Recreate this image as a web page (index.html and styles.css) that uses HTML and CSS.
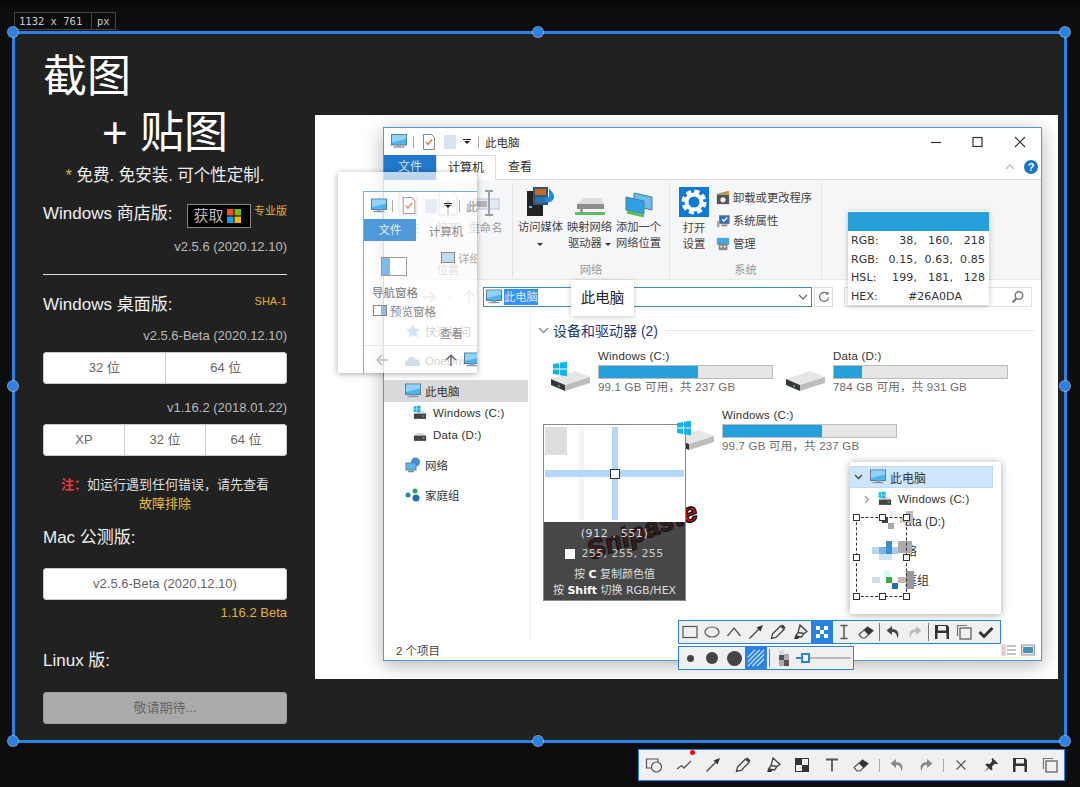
FILE: index.html
```html
<!DOCTYPE html>
<html lang="zh-CN">
<head>
<meta charset="utf-8">
<title>Snipaste</title>
<link rel="stylesheet" href="styles.css">
</head>
<body>
<svg class="sprite" width="0" height="0" aria-hidden="true">
  <symbol id="pc" viewBox="0 0 16 16"><rect x=".5" y="1" width="15" height="10.5" fill="#4db4f2" stroke="#5c7f99"/><path d="M1 1.5h14v4L1 9z" fill="#8fd3f8"/><path d="M6 11.5h4v1.5H6z" fill="#9ab"/><path d="M2.500 13.500h11" stroke="#8a9aa8" stroke-width="1.500"/></symbol>
  <symbol id="qadoc" viewBox="0 0 12 16"><path d="M.5.5h8l3 3v12H.5z" fill="#fff" stroke="#888"/><path d="M3 8l2 2.500L9 5.500" fill="none" stroke="#e8742a" stroke-width="1.400"/></symbol>
  <symbol id="winlogo" viewBox="0 0 16 16"><path d="M1 3l6-1v5.500H1zM8 1.800L15 .8v6.700H8zM1 8.500h6V14l-6-1zM8 8.500h7v6.700l-7-1z" fill="#10b4f0"/></symbol>
  <symbol id="drive" viewBox="0 0 40 20"><path d="M1 8L25 0l15 6-25 8z" fill="#e6e6e6"/><path d="M1 8l14 6v6L1 14z" fill="#363636"/><path d="M15 14l25-8v6l-25 8z" fill="#bdbdbd"/><circle cx="9" cy="15" r="1.100" fill="#4fc05a"/></symbol>
  <symbol id="smalldrive" viewBox="0 0 16 12"><path d="M1 5L4 2h8l3 3z" fill="#d8d8d8"/><rect x="1" y="5" width="14" height="6" fill="#444"/><rect x="11" y="7" width="2" height="1.500" fill="#5c5"/></symbol>
  <symbol id="netglobe" viewBox="0 0 16 16"><circle cx="10.500" cy="5" r="4.500" fill="#3f8fd8"/><rect x="1" y="6" width="10" height="7" fill="#5cb8ef" stroke="#5c7f99"/><path d="M3 14.500h6" stroke="#789" stroke-width="1.500"/></symbol>
  <symbol id="home" viewBox="0 0 16 16"><circle cx="3" cy="8" r="2.500" fill="#2d7fc9"/><circle cx="10" cy="4" r="2.500" fill="#2aa05a"/><circle cx="11" cy="11" r="3.500" fill="#1f6fb8"/></symbol>
  <symbol id="media" viewBox="0 0 30 30"><rect x="1" y="5" width="16" height="25" fill="#222"/><rect x="7" y="1" width="15" height="18" fill="#36566f"/><rect x="9" y="3" width="11" height="6" fill="#c66a2a"/><rect x="9" y="11" width="11" height="6" fill="#2f6db0"/><path d="M23 2c2 4 6 5 5 10-1 4-7 6-9 3s3-5 4-4z" fill="#1a8ee0"/><rect x="3" y="20" width="3" height="2" fill="#4cf"/></symbol>
  <symbol id="mapdrive" viewBox="0 0 32 20"><path d="M3 7L10 1h17l3 6z" fill="#ddd"/><rect x="3" y="7" width="27" height="5" fill="#8d8d8d"/><path d="M1 15h30v3H1z" fill="#5bbf5b"/><rect x="6" y="12" width="3" height="4" fill="#999"/></symbol>
  <symbol id="netloc" viewBox="0 0 28 26"><path d="M9 1l18 4v13L9 14z" fill="#6ebce9" stroke="#4d7a9b"/><path d="M1 5l18 4v13L1 18z" fill="#2f9fe6" stroke="#4d7a9b"/><path d="M2 20l17 4" stroke="#58c058" stroke-width="3"/></symbol>
  <symbol id="gear" viewBox="0 0 30 30"><rect width="30" height="30" fill="#0c7bd8"/><circle cx="15" cy="15" r="7.500" fill="none" stroke="#fff" stroke-width="4"/><circle cx="15" cy="15" r="10.500" fill="none" stroke="#fff" stroke-width="4" stroke-dasharray="5 3.250"/></symbol>
  <symbol id="uninstall" viewBox="0 0 16 16"><rect x="1" y="4" width="14" height="11" fill="#555"/><circle cx="8" cy="10" r="3" fill="#eee"/><path d="M1 3l8-2h6v3H1z" fill="#8fa068"/><path d="M11 0h4v4h-4z" fill="#e89028"/></symbol>
  <symbol id="sysprop" viewBox="0 0 16 16"><rect x="4" y="2" width="11" height="9" fill="#2f6fc8" stroke="#678"/><path d="M7 6l2 2 4-4" stroke="#fff" stroke-width="1.500" fill="none"/><rect x="1" y="8" width="3" height="7" fill="#aaa"/><path d="M6 13h7" stroke="#888" stroke-width="2"/></symbol>
  <symbol id="manage" viewBox="0 0 16 16"><rect x="1" y="1" width="14" height="8" fill="#3fa8ea"/><rect x="3" y="7" width="10" height="8" fill="#888"/><rect x="5" y="10" width="2" height="2" fill="#fff"/><rect x="9" y="10" width="2" height="2" fill="#fff"/></symbol>
  <symbol id="r-doc" viewBox="0 0 20 26"><path d="M1 1h13l5 5v19H1z" fill="#fff" stroke="#888"/></symbol>
  <symbol id="r-open" viewBox="0 0 20 26"><path d="M1 1h13l5 5v19H1z" fill="#fff" stroke="#888"/><path d="M10 25V12M5 17l5-5 5 5" fill="none" stroke="#555" stroke-width="2"/></symbol>
  <symbol id="r-rename" viewBox="0 0 28 26"><rect x="1" y="9" width="26" height="10" fill="#dbe7f3" stroke="#aac"/><rect x="3" y="11" width="12" height="6" fill="#9a9a9a"/><path d="M13 1h8M17 1v24M13 25h8" fill="none" stroke="#6d7a86" stroke-width="1.800"/></symbol>
  <symbol id="i-rect" viewBox="0 0 16 16"><rect x="1" y="2.500" width="14" height="11" fill="none" stroke="#555" stroke-width="1.200"/></symbol>
  <symbol id="i-ell" viewBox="0 0 16 16"><ellipse cx="8" cy="8" rx="7" ry="5" fill="none" stroke="#555" stroke-width="1.200"/></symbol>
  <symbol id="i-poly" viewBox="0 0 16 16"><path d="M1.500 12L8 4l6.500 8" fill="none" stroke="#555" stroke-width="1.300"/></symbol>
  <symbol id="i-arrow" viewBox="0 0 16 16"><path d="M1.500 14.500L10.500 5.500" stroke="#444" stroke-width="1.300"/><path d="M8.500 3.500L15 1l-2.500 6.500z" fill="#333"/></symbol>
  <symbol id="i-pen" viewBox="0 0 16 16"><path d="M2.500 10L10.500 2l3.500 3.500-8 8-4.500 1z" fill="none" stroke="#444" stroke-width="1.300"/><path d="M11 1.500l1.500-1 3 3-1 1.500z" fill="#333"/></symbol>
  <symbol id="i-mark" viewBox="0 0 16 16"><path d="M8 1l7 6.500-3 2-6-1z M6 8.500l6 1-2.500 3.500-6-1z" fill="none" stroke="#444" stroke-width="1.300"/><path d="M3.500 12L2 15h4l2-2z" fill="#333"/></symbol>
  <symbol id="i-mos" viewBox="0 0 16 16"><path d="M2 2h4v4H2zM10 2h4v4h-4zM6 6h4v4H6zM2 10h4v4H2zM10 10h4v4h-4z" fill="#fff"/></symbol>
  <symbol id="i-ibeam" viewBox="0 0 16 16"><path d="M4.500 1.500h7M8 1.500v13M4.500 14.500h7" stroke="#555" stroke-width="1.500" fill="none"/></symbol>
  <symbol id="i-eraser" viewBox="0 0 16 16"><path d="M1 10.500L9.500 3 15 6.500 7 14H4z" fill="none" stroke="#555" stroke-width="1.200"/><path d="M6 6.500L9.500 3 15 6.500 10.500 11z" fill="#333"/></symbol>
  <symbol id="i-undo" viewBox="0 0 16 16"><path d="M7 2L1.500 6.500 7 11V8c3 0 5 1.500 5.500 6.500C15 9 12.500 5 7 5z" fill="currentColor"/></symbol>
  <symbol id="i-redo" viewBox="0 0 16 16"><path d="M9 2l5.500 4.500L9 11V8c-3 0-5 1.500-5.500 6.500C1 9 3.500 5 9 5z" fill="currentColor"/></symbol>
  <symbol id="i-save" viewBox="0 0 16 16"><path d="M1 1h12l2 2v12H1z" fill="#333"/><rect x="4" y="2" width="8" height="4.500" fill="#f0f0f0"/><rect x="3.500" y="9" width="9" height="6" fill="#f0f0f0"/></symbol>
  <symbol id="i-copy" viewBox="0 0 16 16"><path d="M1.500 12V1.500H11" fill="none" stroke="#777" stroke-width="1.200"/><rect x="4" y="4" width="11" height="11" fill="none" stroke="#555" stroke-width="1.200"/></symbol>
  <symbol id="i-check" viewBox="0 0 16 16"><path d="M1.500 8L6 12.500 14.500 4" fill="none" stroke="#333" stroke-width="3"/></symbol>
  <symbol id="i-shape" viewBox="0 0 18 16"><path d="M7 11H1.500V2H13v3" fill="none" stroke="#555" stroke-width="1.200"/><circle cx="11.500" cy="10" r="5" fill="none" stroke="#555" stroke-width="1.200"/></symbol>
  <symbol id="i-line" viewBox="0 0 16 16"><path d="M1 12l4.500-3.500 2.500 2.500 7-7" fill="none" stroke="#555" stroke-width="1.300"/></symbol>
  <symbol id="i-check2" viewBox="0 0 16 16"><rect x="1.500" y="1.500" width="13" height="13" fill="none" stroke="#333"/><path d="M1.500 1.500h6.500v6.500H1.500zM8 8h6.500v6.500H8z" fill="#333"/></symbol>
  <symbol id="i-t" viewBox="0 0 16 16"><path d="M2 2.500h12M8 2.500v12" stroke="#555" stroke-width="1.800" fill="none"/></symbol>
  <symbol id="i-x" viewBox="0 0 16 16"><path d="M3.500 3.500l9 9M12.500 3.500l-9 9" stroke="#555" stroke-width="1.200"/></symbol>
  <symbol id="i-pin" viewBox="0 0 16 16"><path d="M9.500 1L15 6.500l-1.500.8-1.800-.6-2.700 2.700.4 3-1.200 1.100L2.300 7.800l1.200-1.200 3 .4 2.700-2.700-.6-1.800zM5 10.500l-4 4.500 5-4z" fill="#333"/></symbol>
  <symbol id="hatch" viewBox="0 0 20 20"><rect width="20" height="20" fill="#2a82e4"/><path d="M1 9l8-8M1 14L14 1M1 19L19 1M6 19L19 6M11 19l8-8" stroke="#cfe4fb" stroke-width="1.400"/></symbol>
</svg>

<div class="dim-top"></div>

<div class="size-label"><span class="size-num">1132 x 761</span><span class="size-unit">px</span></div>

<main class="selection">
  <aside class="side">
    <h1 class="hero">截图</h1>
    <h1 class="hero hero-center">+ 贴图</h1>
    <p class="tagline"><span class="gold">*</span> 免费. 免安装. 可个性定制.</p>

    <div class="store-row">
      <h2 class="os-title">Windows 商店版:</h2>
      <span class="get-btn">获取
        <svg class="ms-logo" width="14" height="14" viewBox="0 0 14 14"><rect width="6.500" height="6.500" fill="#f25022"/><rect x="7.500" width="6.500" height="6.500" fill="#7fba00"/><rect y="7.500" width="6.500" height="6.500" fill="#00a4ef"/><rect x="7.500" y="7.500" width="6.500" height="6.500" fill="#ffb900"/></svg>
      </span>
      <span class="tag tag-pro">专业版</span>
    </div>
    <p class="ver ver-store">v2.5.6 (2020.12.10)</p>
    <hr class="rule">

    <div class="os-row">
      <h2 class="os-title">Windows 桌面版:</h2>
      <span class="tag">SHA-1</span>
    </div>
    <p class="ver ver-desktop">v2.5.6-Beta (2020.12.10)</p>
    <div class="btn-group">
      <a class="btn">32 位</a>
      <a class="btn">64 位</a>
    </div>
    <p class="ver ver-old">v1.16.2 (2018.01.22)</p>
    <div class="btn-group">
      <a class="btn">XP</a>
      <a class="btn">32 位</a>
      <a class="btn">64 位</a>
    </div>
    <p class="note"><b class="note-red">注：</b>如运行遇到任何错误，请先查看<br><a class="note-link">故障排除</a></p>

    <h2 class="os-title os-mac">Mac 公测版:</h2>
    <div class="btn-group btn-mac"><a class="btn">v2.5.6-Beta (2020.12.10)</a></div>
    <p class="ver-beta">1.16.2 Beta</p>

    <h2 class="os-title os-linux">Linux 版:</h2>
    <div class="btn-group btn-off"><a class="btn">敬请期待...</a></div>
  </aside>

  <section class="shot">
    <div class="explorer">
      <header class="titlebar">
        <svg class="qa-pc"><use href="#pc"/></svg>
        <i class="vsep"></i>
        <svg class="qa-doc"><use href="#qadoc"/></svg>
        <span class="qa-page"></span>
        <span class="qa-drop"></span>
        <i class="vsep"></i>
        <span class="win-title">此电脑</span>
        <span class="win-controls">
          <svg width="14" height="14" viewBox="0 0 14 14"><path d="M2 7.500h10" stroke="#333" stroke-width="1.200"/></svg>
          <svg width="14" height="14" viewBox="0 0 14 14"><rect x="2" y="2.500" width="9" height="9" fill="none" stroke="#333" stroke-width="1.200"/></svg>
          <svg width="14" height="14" viewBox="0 0 14 14"><path d="M2 2l10 10M12 2L2 12" stroke="#333" stroke-width="1.100"/></svg>
        </span>
      </header>
      <nav class="tabs">
        <span class="tab tab-file">文件</span>
        <span class="tab tab-on">计算机</span>
        <span class="tab tab-view">查看</span>
        <span class="tab-right">
          <svg width="12" height="8" viewBox="0 0 12 8"><path d="M2 6l4-4 4 4" fill="none" stroke="#bbb" stroke-width="1.300"/></svg>
          <span class="help">?</span>
        </span>
      </nav>
      <div class="ribbon">
        <div class="rib-group rib-loc">
          <div class="rib-ghost">
            <div class="rib-col"><svg class="rg-doc"><use href="#r-doc"/></svg><span class="rib-cap">属性</span></div>
            <div class="rib-col"><svg class="rg-doc"><use href="#r-open"/></svg><span class="rib-cap">打开</span></div>
            <div class="rib-col"><svg class="rg-ren"><use href="#r-rename"/></svg><span class="rib-cap">重命名</span></div>
          </div>
          <span class="rib-label">位置</span>
        </div>
        <div class="rib-group rib-net">
          <div class="rib-items">
            <div class="rib-big"><svg class="big-media"><use href="#media"/></svg><span class="rib-cap">访问媒体<br><i class="caret"></i></span></div>
            <div class="rib-big"><svg class="big-map"><use href="#mapdrive"/></svg><span class="rib-cap">映射网络<br>驱动器 <i class="caret"></i></span></div>
            <div class="rib-big"><svg class="big-net"><use href="#netloc"/></svg><span class="rib-cap">添加一个<br>网络位置</span></div>
          </div>
          <span class="rib-label">网络</span>
        </div>
        <div class="rib-group rib-sys">
          <div class="rib-items">
            <div class="rib-big"><svg class="big-gear"><use href="#gear"/></svg><span class="rib-cap">打开<br>设置</span></div>
            <div class="rib-list">
              <span class="rib-line"><svg><use href="#uninstall"/></svg>卸载或更改程序</span>
              <span class="rib-line"><svg><use href="#sysprop"/></svg>系统属性</span>
              <span class="rib-line"><svg><use href="#manage"/></svg>管理</span>
            </div>
          </div>
          <span class="rib-label">系统</span>
        </div>
      </div>
      <div class="addr-row">
        <svg class="nav-arrows" width="99" height="20" viewBox="0 0 99 20"><path d="M2 10h12M2 10l5-5M2 10l5 5M39 10h12M51 10l-5-5M51 10l-5 5M85 16V4M85 4l-5 5M85 4l5 5" fill="none" stroke="#bbb" stroke-width="1.500"/><path d="M63 9l3 3 3-3" fill="none" stroke="#bbb"/></svg>
        <div class="addr-box">
          <svg class="addr-pc"><use href="#pc"/></svg>
          <span class="addr-sel">此电脑</span>
          <svg class="addr-chev" width="10" height="6" viewBox="0 0 10 6"><path d="M1 1l4 4 4-4" fill="none" stroke="#666" stroke-width="1.200"/></svg>
        </div>
        <span class="refresh">
          <svg width="12" height="12" viewBox="0 0 12 12"><path d="M9.500 3A4.500 4.500 0 1 0 10.500 6.500" fill="none" stroke="#666" stroke-width="1.200"/><path d="M7.500 3.500l3 0V.5z" fill="#666"/></svg>
        </span>
        <div class="search-box">
          <svg width="14" height="14" viewBox="0 0 14 14"><circle cx="8" cy="5.500" r="3.800" fill="none" stroke="#777" stroke-width="1.400"/><path d="M5.500 8.500L1.500 12.500" stroke="#777" stroke-width="2"/></svg>
        </div>
      </div>
      <div class="ex-body">
        <div class="tree">
          <div class="tree-item tree-quick"><svg width="16" height="16" viewBox="0 0 16 16"><path d="M8 1l2.100 4.600 5 .6-3.700 3.400 1 4.900L8 12.100 3.600 14.500l1-4.900L.9 6.200l5-.6z" fill="#6aa9dc"/></svg>快速访问</div>
          <div class="tree-item tree-gap tree-quick"><svg width="16" height="16" viewBox="0 0 16 16"><path d="M1 13a3 3 0 0 1 1-5.500 4.500 4.500 0 0 1 8.500-1 3.500 3.500 0 0 1 4.500 3.500V13z" fill="#6a8fb8"/></svg>OneDrive</div>
          <div class="tree-item tree-gap tree-on"><svg width="16" height="16"><use href="#pc"/></svg>此电脑</div>
          <div class="tree-item tree-sub"><svg class="mini-win"><use href="#winlogo"/></svg><svg class="mini-drive"><use href="#smalldrive"/></svg>Windows (C:)</div>
          <div class="tree-item tree-sub"><svg class="mini-drive"><use href="#smalldrive"/></svg>Data (D:)</div>
          <div class="tree-item tree-gap"><svg width="16" height="16"><use href="#netglobe"/></svg>网络</div>
          <div class="tree-item tree-gap"><svg width="16" height="16"><use href="#home"/></svg>家庭组</div>
        </div>
        <div class="content">
          <div class="group-head">
            <svg width="11" height="7" viewBox="0 0 11 7"><path d="M1 1l4.500 4.500L10 1" fill="none" stroke="#777" stroke-width="1.100"/></svg>
            <span class="group-title">设备和驱动器 (2)</span>
            <i class="group-line"></i>
          </div>
          <div class="drive-row">
            <div class="drive">
              <span class="drive-icon"><svg class="drive-win"><use href="#winlogo"/></svg><svg class="drive-body"><use href="#drive"/></svg></span>
              <div class="drive-info"><span class="drive-name">Windows (C:)</span><div class="bar"><i class="fill fill-c1"></i></div><span class="drive-free">99.1 GB 可用，共 237 GB</span></div>
            </div>
            <div class="drive">
              <span class="drive-icon"><svg class="drive-body"><use href="#drive"/></svg></span>
              <div class="drive-info"><span class="drive-name">Data (D:)</span><div class="bar"><i class="fill fill-d"></i></div><span class="drive-free">784 GB 可用，共 931 GB</span></div>
            </div>
          </div>
          <div class="drive-row drive-row2">
            <div class="drive">
              <span class="drive-icon"><svg class="drive-win"><use href="#winlogo"/></svg><svg class="drive-body"><use href="#drive"/></svg></span>
              <div class="drive-info"><span class="drive-name">Windows (C:)</span><div class="bar"><i class="fill fill-c2"></i></div><span class="drive-free">99.7 GB 可用，共 237 GB</span></div>
            </div>
          </div>
        </div>
      </div>
      <footer class="status">
        <span>2 个项目</span>
        <span class="status-icons">
          <svg width="16" height="12" viewBox="0 0 16 12"><path d="M6 2h9M6 6h9M6 10h9" stroke="#888"/><path d="M1 1h3v3H1zM1 5h3v3H1zM1 9h3v2H1z" fill="none" stroke="#c89" stroke-width=".7"/></svg>
          <svg width="14" height="12" viewBox="0 0 14 12"><rect x=".5" y="1" width="13" height="10" fill="#dfe9f2" stroke="#999"/><rect x="2" y="3" width="10" height="6" fill="#4a8fb8"/></svg>
        </span>
      </footer>
    </div>

    <!-- translucent pinned picture -->
    <div class="ghost">
      <div class="ghost-win">
        <div class="ghost-title"><svg class="gt-pc"><use href="#pc"/></svg><i class="vsep"></i><svg class="gt-doc"><use href="#qadoc"/></svg><span class="qa-page"></span><span class="qa-drop"></span><i class="vsep"></i><span>此</span></div>
        <div class="ghost-tabs"><span class="ghost-file">文件</span><span class="ghost-tab">计算机</span></div>
        <div class="ghost-ribbon">
          <span class="ghost-pane"></span>
          <span class="ghost-detail"><i></i>详细</span>
        </div>
        <span class="ghost-nav">导航窗格</span>
        <span class="ghost-preview"><i></i>预览窗格</span>
        <span class="ghost-view">查看</span>
        <div class="ghost-foot">
          <svg class="gf-back" width="14" height="14" viewBox="0 0 14 14"><path d="M2 7h11M2 7l5-5M2 7l5 5" fill="none" stroke="#bbb" stroke-width="1.400"/></svg>
          <svg class="gf-up" width="14" height="14" viewBox="0 0 14 14"><path d="M7 13V2M7 2L2 7M7 2l5 5" fill="none" stroke="#666" stroke-width="1.400"/></svg>
          <svg class="gf-pc"><use href="#pc"/></svg>
        </div>
      </div>
    </div>

    <div class="addr-tip">此电脑</div>

    <div class="color-tip">
      <div class="color-swatch"></div>
      <div class="color-grid">
        <span>RGB:</span><span>38,</span><span>160,</span><span>218</span>
        <span>RGB:</span><span>0.15,</span><span>0.63,</span><span>0.85</span>
        <span>HSL:</span><span>199,</span><span>181,</span><span>128</span>
        <span>HEX:</span><span class="hex">#26A0DA</span>
      </div>
    </div>

    <span class="logo-text">Snipaste</span>

    <div class="magnifier">
      <div class="mag-view">
        <i class="mag-block"></i><i class="mag-strip"></i><i class="mag-h"></i><i class="mag-v"></i><i class="mag-center"></i>
      </div>
      <div class="mag-info">
        <span class="mag-pos">(912 , 551)</span>
        <span class="mag-rgb"><i></i>255, 255, 255</span>
        <span class="mag-hint">按 <b>C</b> 复制颜色值</span>
        <span class="mag-hint">按 <b>Shift</b> 切换 RGB/HEX</span>
      </div>
    </div>

    <div class="snippet">
      <div class="snip-row snip-on">
        <svg class="snip-chev" width="9" height="6" viewBox="0 0 9 6"><path d="M1 1l3.500 3.500L8 1" fill="none" stroke="#444" stroke-width="1.300"/></svg>
        <svg class="snip-pc"><use href="#pc"/></svg>此电脑
      </div>
      <div class="snip-row snip-sub">
        <svg class="snip-chev" width="6" height="9" viewBox="0 0 6 9"><path d="M1 1l3.500 3.500L1 8" fill="none" stroke="#999" stroke-width="1.200"/></svg>
        <svg class="mini-win"><use href="#winlogo"/></svg><svg class="mini-drive"><use href="#smalldrive"/></svg>Windows (C:)
      </div>
      <span class="snip-frag frag-d">ata (D:)</span>
      <span class="snip-frag frag-n">络</span>
      <span class="snip-frag frag-h">庭组</span>
      <svg class="snip-mosaic" width="70" height="90" viewBox="0 0 70 90">
        <path d="M22 12h6v6h-6zM36 6h6v6h-6z" fill="#eee"/><path d="M28 12h6v6h-6z" fill="#444"/><path d="M34 18h6v6h-6z" fill="#aaa"/><path d="M46 12h6v6h-6z" fill="#d8c8b0"/><path d="M52 6h7v12h-7z" fill="#bbb"/>
        <path d="M18 42h7v7h-7z" fill="#b8d8f4"/><path d="M25 42h7v7h-7z" fill="#78b0e0"/><path d="M32 36h6v6h-6zM32 42h6v7h-6z" fill="#3d8ed0"/><path d="M38 42h6v7h-6z" fill="#a8cdee"/><path d="M44 36h14v12H44z" fill="#aaa"/><path d="M25 49h13v6H25z" fill="#cfe3f5"/>
        <path d="M18 72h8v6h-8z" fill="#d0dcf0"/><path d="M30 66h6v6h-6z" fill="#cfe"/><path d="M32 72h6v6h-6z" fill="#3aa84c"/><path d="M38 78h6v6h-6z" fill="#1f70b8"/><path d="M44 72h8v6h-8z" fill="#c8b8a8"/><path d="M52 66h8v18h-8z" fill="#999"/>
      </svg>
      <div class="crop">
        <i class="h h-tl"></i><i class="h h-tc"></i><i class="h h-tr"></i>
        <i class="h h-ml"></i><i class="h h-mr"></i>
        <i class="h h-bl"></i><i class="h h-bc"></i><i class="h h-br"></i>
      </div>
    </div>

    <div class="tb tb-main">
      <span class="tb-btn"><svg><use href="#i-rect"/></svg></span>
      <span class="tb-btn"><svg><use href="#i-ell"/></svg></span>
      <span class="tb-btn"><svg><use href="#i-poly"/></svg></span>
      <span class="tb-btn"><svg><use href="#i-arrow"/></svg></span>
      <span class="tb-btn"><svg><use href="#i-pen"/></svg></span>
      <span class="tb-btn"><svg><use href="#i-mark"/></svg></span>
      <span class="tb-btn tb-active"><svg><use href="#i-mos"/></svg></span>
      <span class="tb-btn"><svg><use href="#i-ibeam"/></svg></span>
      <span class="tb-btn"><svg><use href="#i-eraser"/></svg></span>
      <i class="tb-sep"></i>
      <span class="tb-btn"><svg><use href="#i-undo"/></svg></span>
      <span class="tb-btn tb-off"><svg><use href="#i-redo"/></svg></span>
      <i class="tb-sep"></i>
      <span class="tb-btn"><svg><use href="#i-save"/></svg></span>
      <span class="tb-btn"><svg><use href="#i-copy"/></svg></span>
      <span class="tb-btn"><svg><use href="#i-check"/></svg></span>
    </div>
    <div class="tb tb-sub">
      <span class="tb-btn"><i class="dot dot-s"></i></span>
      <span class="tb-btn"><i class="dot dot-m"></i></span>
      <span class="tb-btn"><i class="dot dot-l"></i></span>
      <span class="tb-btn tb-active"><svg class="tb-hatch"><use href="#hatch"/></svg></span>
      <i class="tb-sep"></i>
      <span class="tb-btn tb-mosaic"><svg viewBox="0 0 16 16"><path d="M6 0h5v5H6z" fill="#ddd"/><path d="M0 5h6v6H0z" fill="#eee"/><path d="M6 5h5v5H6zM11 10h5v6h-5z" fill="#555"/><path d="M11 4h5v6h-5zM6 10h5v6H6z" fill="#aaa"/></svg></span>
      <span class="slider"><i class="slider-fill"></i><i class="slider-knob"></i></span>
    </div>
  </section>
  <i class="hd hd-tl"></i><i class="hd hd-tc"></i><i class="hd hd-tr"></i>
  <i class="hd hd-ml"></i><i class="hd hd-mr"></i>
  <i class="hd hd-bl"></i><i class="hd hd-bc"></i><i class="hd hd-br"></i>
</main>

<div class="dock">
  <span class="dock-btn"><svg class="dock-wide"><use href="#i-shape"/></svg></span>
  <span class="dock-btn"><svg><use href="#i-line"/></svg><i class="red-dot"></i></span>
  <span class="dock-btn"><svg><use href="#i-arrow"/></svg></span>
  <span class="dock-btn"><svg><use href="#i-pen"/></svg></span>
  <span class="dock-btn"><svg><use href="#i-mark"/></svg></span>
  <span class="dock-btn"><svg><use href="#i-check2"/></svg></span>
  <span class="dock-btn"><svg><use href="#i-t"/></svg></span>
  <span class="dock-btn dock-last"><svg><use href="#i-eraser"/></svg></span>
  <i class="dock-sep"></i>
  <span class="dock-btn dock-faded"><svg><use href="#i-undo"/></svg></span>
  <span class="dock-btn dock-faded"><svg><use href="#i-redo"/></svg></span>
  <i class="dock-sep"></i>
  <span class="dock-btn"><svg><use href="#i-x"/></svg></span>
  <span class="dock-btn"><svg><use href="#i-pin"/></svg></span>
  <span class="dock-btn"><svg><use href="#i-save"/></svg></span>
  <span class="dock-btn"><svg><use href="#i-copy"/></svg></span>
</div>
</body>
</html>
```

FILE: styles.css
```css
* { box-sizing: border-box; }
html, body { margin: 0; padding: 0; }
body {
  width: 1080px;
  height: 787px;
  overflow: hidden;
  position: relative;
  background: #0d0d0d;
  color: #fff;
  font-family: "Liberation Sans", "Noto Sans CJK SC", sans-serif;
}
.sprite { position: absolute; }
h1, h2, p { margin: 0; font-weight: 400; }
i { font-style: normal; display: block; }
.dim-top { height: 5px; background: #080808; }

.size-label {
  position: absolute;
  left: 14px;
  top: 12px;
  height: 18px;
  display: flex;
  border: 1px solid #444;
  font: 10.5px/16px "DejaVu Sans Mono", monospace;
  color: #ccc;
}
.size-num { padding: 0 4px; border-right: 1px solid #444; width: 77px; white-space: nowrap; }
.size-unit { padding: 0 5px; }

.selection {
  position: absolute;
  left: 12px;
  top: 31px;
  width: 1055px;
  height: 712px;
  border: 3px solid #2a82e4;
  background: #212121;
  display: flex;
  gap: 28px;
  padding-left: 28px;
}

/* left column */
.side { width: 244px; flex: none; }
.hero { font-size: 44px; line-height: 56px; color: #fff; padding-top: 15px; box-sizing: content-box; height: 44px; }
.hero-center { text-align: center; padding-top: 12px; height: 56px; }
.tagline { text-align: center; font-size: 16.500px; line-height: 20px; margin-top: 4px; color: #eee; }
.gold { color: #e8b03c; }
.store-row { display: flex; align-items: flex-start; margin-top: 18px; height: 26px; }
.os-title { font-size: 17px; line-height: 22px; color: #f0f0f0; }
.get-btn {
  margin-left: 15px;
  width: 64px;
  height: 24px;
  background: #000;
  border: 1px solid #888;
  color: #bbb;
  font-size: 15px;
  line-height: 22px;
  padding-left: 5px;
  display: flex;
  align-items: center;
  gap: 4px;
  margin-top: 1px;
  flex: none;
}
.ms-logo { flex: none; }
.tag { margin-left: auto; font-size: 11px; line-height: 14px; color: #e0b030; white-space: nowrap; }
.tag-pro { margin-top: 1px; }
.ver { text-align: right; font-size: 13px; line-height: 18px; color: #bbb; }
.ver-store { margin-top: 9px; }
.rule { border: 0; border-top: 1px solid #ddd; margin: 18px 0 0; }
.os-row { display: flex; align-items: flex-start; margin-top: 19px; }
.os-row .tag { margin-top: 0; }
.ver-desktop { margin-top: 11px; }
.btn-group {
  display: flex;
  height: 32px;
  margin-top: 7px;
  background: #fff;
  border-radius: 3px;
  overflow: hidden;
  border: 1px solid #ccc;
}
.btn {
  flex: 1;
  text-align: center;
  color: #666;
  font-size: 13px;
  line-height: 30px;
  border-left: 1px solid #ccc;
}
.btn:first-child { border-left: 0; }
.ver-old { margin-top: 15px; }
.note { text-align: center; font-size: 13px; line-height: 19px; margin-top: 19px; color: #ddd; }
.note-red { color: #e8383a; font-weight: 700; }
.note-link { color: #e6bc3a; }
.os-mac { margin-top: 14px; }
.btn-mac { margin-top: 19px; }
.ver-beta { text-align: right; color: #e0b030; font-size: 13px; line-height: 18px; margin-top: 4px; }
.os-linux { margin-top: 28px; }
.btn-off { margin-top: 20px; background: #aaa; border-color: #999; }
.btn-off .btn { color: #666; }

/* picture */
.shot {
  position: relative;
  width: 743px;
  height: 564px;
  margin-top: 81px;
  background: #fff;
  padding: 12px 0 0 68px;
  flex: none;
  font-size: 12px;
  color: #333;
}
.explorer {
  width: 659px;
  height: 534px;
  border: 1px solid #4f9bd8;
  box-shadow: 0 4px 18px rgba(0,0,0,.3);
  background: #fff;
  display: flex;
  flex-direction: column;
}
.titlebar { height: 27px; display: flex; align-items: center; padding-left: 7px; flex: none; }
.qa-pc { width: 16px; height: 17px; flex: none; }
.vsep { width: 1px; height: 12px; background: #aaa; margin: 0 9px 0 6px; flex: none; }
.qa-drop + .vsep { margin: 0 6px 0 7px; }
.qa-doc { width: 12px; height: 16px; flex: none; }
.qa-page { width: 12px; height: 14px; background: #d7e3f3; margin-left: 9px; flex: none; }
.qa-drop { width: 8px; height: 5px; border-top: 1px solid #222; margin-left: 7px; position: relative; flex: none; }
.qa-drop::after { content: ""; position: absolute; left: 1px; top: 1px; border: 3px solid transparent; border-top-color: #222; border-bottom: 0; }
.win-title { font-size: 11.500px; }
.win-controls { margin-left: auto; display: flex; gap: 28px; padding-right: 14px; }

.tabs { height: 25px; display: flex; flex: none; border-bottom: 1px solid #dadbdc; position: relative; }
.tab { font-size: 12px; line-height: 25px; height: 25px; text-align: center; }
.tab-file { width: 52px; background: #1f79cc; color: #dde; }
.tab-on { width: 60px; background: #fff; border: 1px solid #dadbdc; border-bottom: 0; line-height: 24px; }
.tab-view { width: 48px; }
.tab-right { margin-left: auto; display: flex; align-items: center; gap: 8px; padding-right: 3px; }
.help { width: 14px; height: 14px; border-radius: 50%; background: #1a73c9; color: #fff; text-align: center; font: 700 11px/14px "Liberation Sans", sans-serif; }

.ribbon { height: 100px; display: flex; background: #f5f6f7; flex: none; border-bottom: 1px solid #e8e8e8; padding-top: 3px; }
.rib-group { position: relative; border-right: 1px solid #e2e3e4; height: 95px; display: flex; flex-direction: column; }
.rib-loc { width: 129px; }
.rib-net { width: 157px; }
.rib-sys { width: 152px; }
.rib-items { display: flex; flex: 1; }
.rib-ghost { flex: 1; display: grid; grid-template-columns: 40px 40px 35px; padding: 7px 0 0 4px; }
.rib-col { display: flex; flex-direction: column; align-items: center; }
.rg-doc { width: 20px; height: 26px; margin-bottom: 4px; opacity: .7; }
.rg-ren { width: 28px; height: 26px; margin-bottom: 4px; opacity: .7; }
.rib-label { text-align: center; font-size: 11.300px; line-height: 16px; color: #9a9a9a; }
.rib-big { width: 49px; display: flex; flex-direction: column; align-items: center; }
.rib-net .rib-items { padding-left: 3px; }
.rib-big svg { flex: none; }
.big-media { width: 30px; height: 30px; margin-top: 3px; margin-bottom: 3px; }
.big-map { width: 32px; height: 20px; margin: 14px 0 2px; }
.big-net { width: 28px; height: 26px; margin: 9px 0 1px; }
.big-gear { width: 30px; height: 30px; margin: 4px 0 3px; }
.rib-cap { text-align: center; font-size: 11.300px; line-height: 16px; white-space: nowrap; color: #444; }
.rib-ghost .rib-cap { color: #999; }
.caret { display: inline-block; border: 3px solid transparent; border-top-color: #333; border-bottom: 0; vertical-align: middle; }
.rib-sys .rib-big { width: 44px; margin-left: 2px; }
.rib-list { display: flex; flex-direction: column; gap: 7px; padding-top: 7px; }
.rib-line { display: flex; align-items: center; gap: 3px; font-size: 11.300px; line-height: 16px; color: #444; white-space: nowrap; }
.rib-line svg { width: 14px; height: 14px; flex: none; }

.addr-row { height: 32px; display: flex; align-items: center; flex: none; padding-top: 2px; }
.nav-arrows { flex: none; }
.addr-box { width: 329px; height: 20px; border: 1px solid #3b8ad0; display: flex; align-items: center; padding-left: 2px; }
.addr-pc { width: 16px; height: 16px; flex: none; margin-right: 2px; }
.addr-sel { background: #3392ff; color: #dbe9fb; font-size: 11.300px; line-height: 16px; }
.addr-chev { margin-left: auto; margin-right: 3px; }
.refresh { width: 19px; height: 20px; border: 1px solid #dadada; margin-left: 2px; display: flex; align-items: center; justify-content: center; }
.search-box { width: 188px; height: 20px; border: 1px solid #e2e2e2; margin-left: 11px; display: flex; align-items: center; justify-content: flex-end; padding-right: 6px; }

.ex-body { flex: 1; display: flex; min-height: 0; }
.tree { width: 147px; border-right: 1px solid #eee; padding-top: 8px; flex: none; }
.tree-item { height: 22px; display: flex; align-items: center; padding-left: 21px; font-size: 11.500px; gap: 4px; color: #333; white-space: nowrap; }
.tree-gap { margin-top: 8px; }
.tree-on { background: #d9d9d9; margin-right: 2px; }
.tree-sub { padding-left: 29px; letter-spacing: .2px; }
.tree-quick { color: #666; }
.mini-win { width: 8px; height: 8px; margin-right: -12px; margin-top: -8px; position: relative; z-index: 1; flex: none; }
.mini-drive { width: 14px; height: 11px; margin: 3px 2px 0 0; flex: none; }

.content { flex: 1; padding: 7px 7px 0; }
.group-head { height: 22px; display: flex; align-items: center; }
.group-title { font-size: 14px; color: #1f3a7a; margin-left: 4px; white-space: nowrap; }
.group-line { flex: 1; height: 1px; background: #e6e6e6; margin-left: 7px; }
.drive-row { display: flex; margin: 7px 0 0 12px; }
.drive-row2 { margin: 9px 0 0 136px; }
.drive { width: 235px; height: 50px; display: flex; }
.drive-icon { width: 48px; height: 50px; position: relative; flex: none; }
.drive-body { position: absolute; left: 0; top: 23px; width: 40px; height: 20px; }
.drive-win { position: absolute; left: 2px; top: 13px; width: 16px; height: 16px; z-index: 1; }
.drive-info { width: 175px; display: flex; flex-direction: column; }
.drive-name { font-size: 11.500px; line-height: 16px; height: 16px; color: #333; letter-spacing: .2px; }
.bar { height: 14px; margin-top: 1px; background: #e6e6e6; border: 1px solid #bcbcbc; }
.fill { height: 100%; background: #26a0da; }
.fill-c1 { width: 57%; }
.fill-d { width: 16%; }
.fill-c2 { width: 57%; }
.drive-free { font-size: 11.500px; line-height: 17px; color: #6d6d6d; letter-spacing: .2px; }

.status { height: 21px; display: flex; align-items: center; padding: 0 6px 0 12px; font-size: 11.500px; flex: none; color: #444; }
.status-icons { margin-left: auto; display: flex; gap: 4px; }

/* overlays: pinned images on the picture */
.ghost {
  position: absolute;
  left: 23px;
  top: 57px;
  width: 139px;
  height: 201px;
  background: rgba(255,255,255,.7);
  box-shadow: 0 1px 6px rgba(0,0,0,.35);
  overflow: hidden;
}
.ghost-win { position: absolute; left: 25px; top: 19px; right: 0; bottom: 0; border: 1px solid #79b0dc; border-right: 0; border-bottom: 0; color: #888; font-size: 11.500px; }
.ghost-title { height: 27px; display: flex; align-items: center; padding-left: 7px; }
.gt-pc { width: 16px; height: 16px; flex: none; }
.ghost-title .vsep { margin: 0 9px 0 5px; }
.ghost-title .qa-drop + .vsep { margin: 0 6px 0 7px; }
.gt-doc { width: 14px; height: 17px; flex: none; opacity: .8; }
.ghost-title .qa-page { opacity: .6; }
.ghost-tabs { display: flex; height: 22px; }
.ghost-file { width: 52px; background: #4f99da; color: #e8f2fb; text-align: center; line-height: 22px; }
.ghost-tab { width: 60px; text-align: center; line-height: 27px; }
.ghost-ribbon { position: relative; height: 50px; }
.ghost-pane { position: absolute; left: 17px; top: 16px; width: 26px; height: 19px; border: 1px solid #999; background: linear-gradient(90deg,#7fbbe8 35%,#fff 35%); }
.ghost-detail { position: absolute; left: 77px; top: 11px; display: flex; gap: 3px; line-height: 14px; color: #aaa; white-space: nowrap; }
.ghost-detail i { width: 14px; height: 11px; border: 1px solid #888; background: #bcdcf4; }
.ghost-nav { position: absolute; left: 8px; top: 92px; color: #777; white-space: nowrap; }
.ghost-preview { position: absolute; left: 9px; top: 111px; color: #888; display: flex; gap: 3px; white-space: nowrap; }
.ghost-preview i { width: 14px; height: 11px; border: 1px solid #888; margin-top: 2px; background: linear-gradient(90deg,#fff 55%,#8bbfe6 55%); }
.ghost-view { position: absolute; left: 76px; top: 133px; color: #888; }
.ghost-foot { position: absolute; left: 0; right: 0; top: 153px; height: 29px; border-top: 1px solid #e5e5e5; display: flex; align-items: center; }
.gf-back { margin-left: 11px; flex: none; }
.gf-up { margin-left: 55px; flex: none; }
.gf-pc { width: 16px; height: 16px; margin-left: 6px; flex: none; }

.addr-tip {
  position: absolute;
  left: 256px;
  top: 165px;
  width: 63px;
  height: 36px;
  background: #fff;
  box-shadow: 0 1px 5px rgba(0,0,0,.22);
  color: #222;
  font-size: 14.500px;
  line-height: 36px;
  text-align: center;
}
.color-tip {
  position: absolute;
  left: 533px;
  top: 96px;
  width: 141px;
  height: 94px;
  background: #fff;
  box-shadow: 0 1px 5px rgba(0,0,0,.25);
}
.color-swatch { height: 19px; background: #26a0da; margin-top: 1px; }
.color-grid {
  display: grid;
  grid-template-columns: 34px 32px 36px 32px;
  grid-auto-rows: 18.500px;
  padding: 1px 0 0 3px;
  font: 11px/18px "DejaVu Sans", sans-serif;
  letter-spacing: .1px;
  color: #333;
  text-align: right;
}
.color-grid span:nth-child(4n+1) { text-align: left; }
.color-grid .hex { grid-column: span 3; text-align: center; }

.logo-text {
  position: absolute;
  left: 269px;
  top: 401px;
  font: italic 700 27px/30px "Liberation Sans", sans-serif;
  color: #e01010;
  -webkit-text-stroke: 1.400px #000;
  transform: rotate(-21deg);
  letter-spacing: .5px;
}
.magnifier { position: absolute; left: 228px; top: 309px; width: 143px; height: 177px; border: 1px solid #888; background: transparent; }
.mag-view { height: 97px; background: #fff; position: relative; overflow: hidden; }
.mag-block { position: absolute; left: 1px; top: 2px; width: 22px; height: 28px; background: #dedede; }
.mag-strip { position: absolute; left: 35px; top: 2px; width: 5px; height: 93px; background: #f3f3f3; }
.mag-h { position: absolute; left: 1px; right: 1px; top: 45px; height: 7px; background: #b5d6fb; }
.mag-v { position: absolute; left: 68px; top: 2px; width: 6px; height: 93px; background: #b5d6fb; }
.mag-center { position: absolute; left: 66px; top: 44px; width: 10px; height: 10px; background: #fff; border: 1px solid #333; }
.mag-info {
  height: 78px;
  background: rgba(30,30,30,.82);
  color: #ddd;
  display: flex;
  flex-direction: column;
  align-items: center;
  font: 11px/16px "DejaVu Sans", "Noto Sans CJK SC", sans-serif;
  padding-top: 4px;
}
.mag-pos { height: 18px; letter-spacing: .6px; }
.mag-rgb { height: 20px; margin-bottom: 3px; display: flex; align-items: center; gap: 6px; letter-spacing: .4px; color: #ccc; }
.mag-rgb i { width: 10px; height: 10px; background: #fff; }
.mag-hint { line-height: 16px; white-space: nowrap; color: #ddd; }
.mag-hint b { font-weight: 700; color: #fff; }

.snippet {
  position: absolute;
  left: 535px;
  top: 347px;
  width: 151px;
  height: 152px;
  background: #fff;
  box-shadow: 0 1px 8px rgba(0,0,0,.35);
  font-size: 12px;
  color: #333;
}
.snip-row { height: 22px; display: flex; align-items: center; white-space: nowrap; }
.snip-on { margin: 4px 8px 0 0; background: #cde6fc; border: 1px solid #bcdcf8; border-left: 0; padding-left: 4px; }
.snip-on .snip-chev { margin-right: 7px; }
.snip-pc { width: 16px; height: 16px; flex: none; margin-right: 4px; }
.snip-sub { padding-left: 14px; gap: 4px; font-size: 11.500px; letter-spacing: .2px; }
.snip-sub .mini-win { margin-left: 4px; }
.snip-frag { position: absolute; white-space: nowrap; line-height: 16px; }
.frag-d { left: 55px; top: 52px; }
.frag-n { left: 55px; top: 82px; }
.frag-h { left: 55px; top: 111px; }
.snip-mosaic { position: absolute; left: 4px; top: 43px; }
.crop { position: absolute; left: 6px; top: 55px; width: 51px; height: 80px; border: 1px dashed #333; }
.h { position: absolute; width: 7px; height: 7px; background: #fff; border: 1px solid #333; }
.h-tl { left: -4px; top: -4px; } .h-tc { left: 22px; top: -4px; } .h-tr { right: -4px; top: -4px; }
.h-ml { left: -4px; top: 36px; } .h-mr { right: -4px; top: 36px; }
.h-bl { left: -4px; bottom: -4px; } .h-bc { left: 22px; bottom: -4px; } .h-br { right: -4px; bottom: -4px; }

.tb {
  position: absolute;
  left: 363px;
  display: flex;
  align-items: stretch;
  background: #f0f0f0;
  border: 1px solid #2a82e4;
}
.tb-main { top: 505px; width: 323px; height: 24px; }
.tb-sub { top: 531px; width: 176px; height: 24px; }
.tb-btn { width: 22px; display: flex; align-items: center; justify-content: center; flex: none; color: #444; }
.tb-off { color: #bbb; }
.tb-btn svg { width: 16px; height: 16px; }
.tb-active { background: #2a82e4; }
.tb-btn .tb-hatch { width: 18px; height: 18px; }
.tb-mosaic { margin-left: -2px; }
.tb-sep { width: 1px; margin: 2px; background: #777; flex: none; }
.dot { border-radius: 50%; background: #444; }
.dot-s { width: 7px; height: 7px; }
.dot-m { width: 12px; height: 12px; }
.dot-l { width: 15px; height: 15px; }
.slider { flex: 1; position: relative; }
.slider::before { content: ""; position: absolute; left: 4px; right: 2px; top: 10px; height: 2px; background: #bbb; }
.slider-fill { position: absolute; left: 4px; width: 6px; top: 10px; height: 2px; background: #2a82e4; }
.slider-knob { position: absolute; left: 9px; top: 6px; width: 9px; height: 10px; background: #fff; border: 2px solid #2a82e4; }

/* selection handles */
.hd { position: absolute; width: 10px; height: 10px; border-radius: 50%; background: #2a82e4; box-shadow: 0 0 0 1px rgba(170,200,240,.7); }
.hd-tl { left: -7px; top: -7px; } .hd-tc { left: 518px; top: -7px; } .hd-tr { right: -6px; top: -7px; }
.hd-ml { left: -7px; top: 347px; } .hd-mr { right: -6px; top: 347px; }
.hd-bl { left: -7px; bottom: -6px; } .hd-bc { left: 518px; bottom: -6px; } .hd-br { right: -6px; bottom: -6px; }

/* bottom toolbar */
.dock {
  position: absolute;
  left: 638px;
  top: 749px;
  width: 427px;
  height: 32px;
  display: flex;
  align-items: center;
  background: #f0f0f0;
  border: 1px solid #2a82e4;
}
.dock-btn { width: 29.700px; height: 30px; display: flex; align-items: center; justify-content: center; position: relative; flex: none; color: #444; }
.dock-btn svg { width: 16px; height: 16px; }
.dock .dock-wide { width: 18px; height: 16px; }
.dock-last { width: 30px; padding-right: 1px; }
.dock-sep { width: 1px; height: 13px; background: #aaa; margin: 0 2px; flex: none; }
.dock-faded { color: #8a8a8a; }
.red-dot { position: absolute; left: 21px; top: 0; width: 5px; height: 5px; border-radius: 50%; background: #f00; }
```
